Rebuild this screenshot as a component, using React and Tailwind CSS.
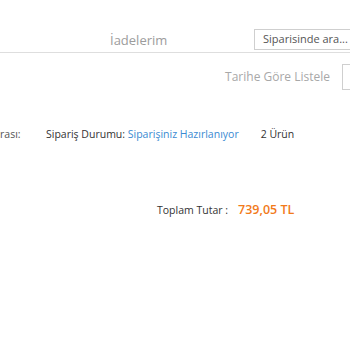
export default function App() {
  return (
    <div className="w-[350px] h-[350px] overflow-hidden bg-white" style={{ fontFamily: '"Open Sans", "Noto Sans", sans-serif' }}>
      <div className="pt-[29px]">
        <div className="flex items-center border-b border-[#dedede] pb-[2px] h-[21px] box-content">
          <div className="w-[110px] shrink-0" />
          <div className="w-[144px] shrink-0 text-[13px] text-[#9c9c9c] leading-none pt-[2px]">İadelerim</div>
          <div className="shrink-0 w-[130px] h-[21px] border border-[#cfcfcf] flex items-center pl-[8px] text-[11px] text-[#555] whitespace-nowrap">
            Siparisinde ara...
          </div>
        </div>
        <div className="flex items-center justify-end mt-[11px] h-[26px]">
          <span className="text-[12px] text-[#a8a8a8] mr-[12px]">Tarihe Göre Listele</span>
          <div className="w-[8px] h-[26px] border-l border-t border-b border-[#cfcfcf]" />
        </div>
        <div className="flex items-center mt-[39px] h-[11px] text-[10.5px] text-[#333] whitespace-nowrap leading-none">
          <span className="w-[46px] text-[#555]">rası:</span>
          <span>Sipariş Durumu: <span className="text-[#3a8ad2]">Siparişiniz Hazırlanıyor</span></span>
          <span className="ml-[22px]">2 Ürün</span>
        </div>
        <div className="flex items-center mt-[62px] h-[17px] leading-none whitespace-nowrap">
          <span className="ml-[157px] text-[10.5px] text-[#333]">Toplam Tutar :</span>
          <span className="ml-[10px] text-[12.5px] font-semibold text-[#f27a1a]">739,05 TL</span>
        </div>
      </div>
    </div>
  );
}
